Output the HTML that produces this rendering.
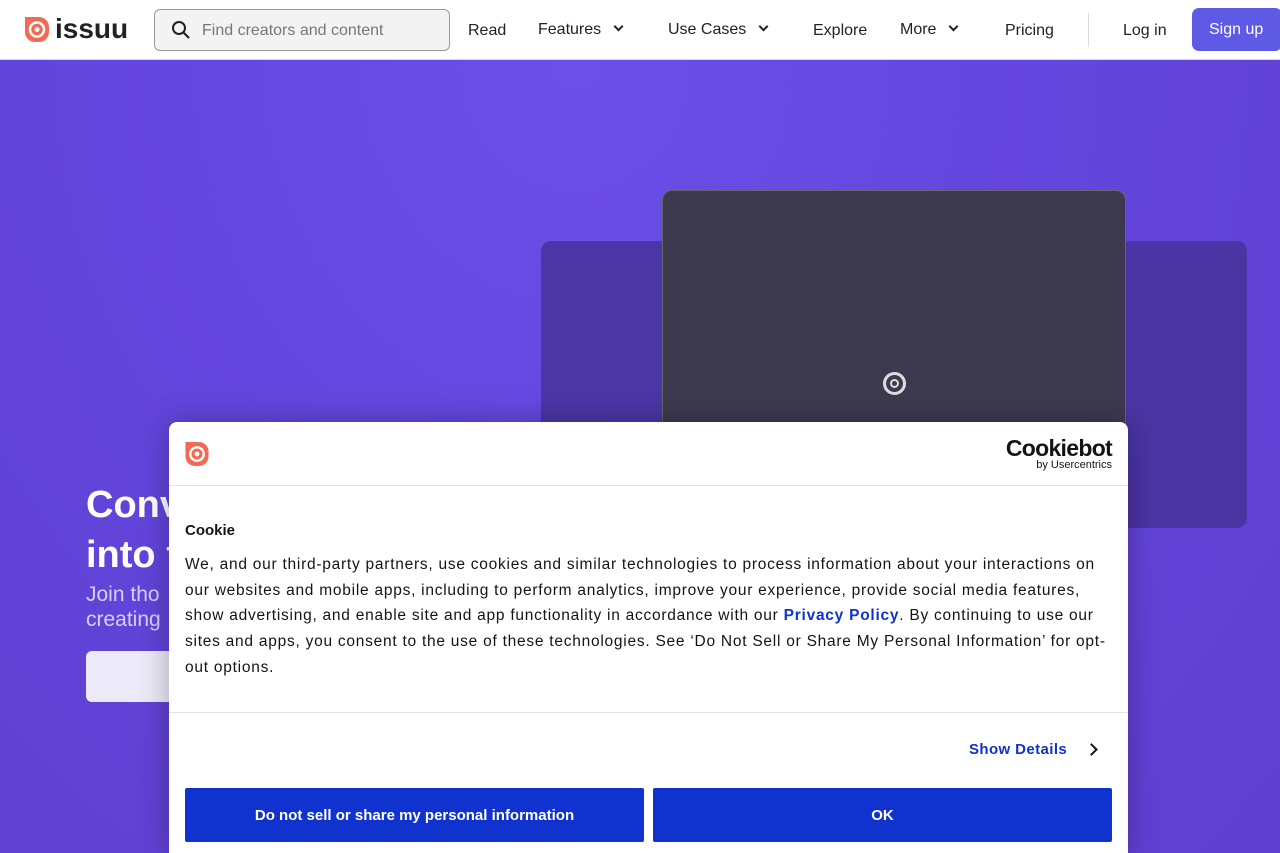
<!DOCTYPE html>
<html><head><meta charset="utf-8"><style>
*{margin:0;padding:0;box-sizing:border-box}
body{width:1280px;height:853px;overflow:hidden;font-family:"Liberation Sans",sans-serif;position:relative;background:#6a4de4}
.nav{position:absolute;top:0;left:0;width:1280px;height:60px;background:#fff;border-bottom:1px solid #d8d4f0;z-index:5}
.nav span{position:absolute;top:22px;font-size:16px;color:#222}
.hero{position:absolute;top:60px;left:0;width:1280px;height:793px;background:radial-gradient(ellipse at 45% 0%,#6c4fe8 0%,#6447df 40%,#5e3fd0 100%)}
.chev{display:inline-block;width:7px;height:7px;border-right:2px solid #222;border-bottom:2px solid #222;transform:rotate(45deg);margin-left:14px;position:relative;top:-4px}
.modal{position:absolute;left:169px;top:422px;width:959px;height:431px;background:#fff;border-radius:8px 8px 0 0;z-index:10;box-shadow:0 0 30px rgba(0,0,0,.3)}
.btn{position:absolute;top:366px;height:54px;background:#1032cf;color:#fff;font-weight:bold;font-size:15px;display:flex;align-items:center;justify-content:center;border-radius:2px}
</style></head><body>
<div class="nav">
<svg style="position:absolute;left:25px;top:17px" width="24" height="25" viewBox="0 0 24 25"><path d="M0 0H14A10 10 0 0 1 24 10V15A10 10 0 0 1 14 25H10A10 10 0 0 1 0 15Z" fill="#f26a54"/><circle cx="12" cy="12.5" r="7" fill="none" stroke="#fff" stroke-width="2.5"/><circle cx="12" cy="12.5" r="2.5" fill="#fff"/></svg>
<span style="left:55px;top:13px;font-size:28px;font-weight:bold;color:#222;letter-spacing:0">issuu</span>
<div style="position:absolute;left:154px;top:9px;width:296px;height:42px;border:1px solid #999;border-radius:6px;background:#f3f3f3"></div>
<svg style="position:absolute;left:171px;top:20px" width="20" height="20" viewBox="0 0 20 20"><circle cx="8" cy="8" r="6" fill="none" stroke="#222" stroke-width="2"/><path d="M12.5 12.5L18 18" stroke="#222" stroke-width="2.2"/></svg>
<span style="left:202px;color:#777">Find creators and content</span>
<span style="left:468px">Read</span>
<span style="left:538px;top:21px">Features<i class="chev"></i></span>
<span style="left:668px;top:21px">Use Cases<i class="chev"></i></span>
<span style="left:813px">Explore</span>
<span style="left:900px;top:21px">More<i class="chev"></i></span>
<span style="left:1005px">Pricing</span>
<div style="position:absolute;left:1088px;top:13px;width:1px;height:34px;background:#ddd"></div>
<span style="left:1123px">Log in</span>
<div style="position:absolute;left:1192px;top:8px;width:90px;height:43px;background:#5e5ae6;border-radius:7px;color:#fff;font-size:16px;padding:13px 0 0 17px">Sign up</div>
</div>
<div class="hero">
<div style="position:absolute;left:541px;top:181px;width:706px;height:287px;background:#48339a;border-radius:10px;opacity:.85"></div>
<div style="position:absolute;left:662px;top:130px;width:464px;height:300px;background:#3d3a50;border-radius:10px;border:1px solid #666"></div>
<svg style="position:absolute;left:882px;top:311px" width="25" height="25"><circle cx="12.5" cy="12.5" r="10" fill="none" stroke="#ddd" stroke-width="3"/><circle cx="12.5" cy="12.5" r="3.5" fill="none" stroke="#ddd" stroke-width="2"/></svg>
<div style="position:absolute;left:86px;top:420px;color:#fff;font-size:38px;font-weight:bold;line-height:50px">Conv<br>into t</div>
<div style="position:absolute;left:86px;top:522px;color:#d8d0f8;font-size:21px;line-height:25px">Join tho<br>creating</div>
<div style="position:absolute;left:86px;top:591px;width:150px;height:51px;background:#eceaf8;border-radius:6px"></div>
</div>
<div class="modal">
<svg style="position:absolute;left:16px;top:20px" width="24" height="24" viewBox="0 0 24 25"><path d="M0 0H14A10 10 0 0 1 24 10V15A10 10 0 0 1 14 25H10A10 10 0 0 1 0 15Z" fill="#f26a54"/><circle cx="12" cy="12.5" r="7" fill="none" stroke="#fff" stroke-width="2.5"/><circle cx="12" cy="12.5" r="2.5" fill="#fff"/></svg>
<div style="position:absolute;right:16px;top:14px;text-align:right;color:#141414"><div style="font-size:23px;font-weight:bold;letter-spacing:-0.7px;line-height:24px">Cookiebot</div><div style="font-size:11px;line-height:11px">by Usercentrics</div></div>
<div style="position:absolute;left:0;top:63px;width:100%;height:1px;background:#e3e3e3"></div>
<div style="position:absolute;left:16px;top:100px;font-weight:bold;font-size:15px;color:#141414">Cookie</div>
<div style="position:absolute;left:16px;top:130px;width:930px;font-size:15.5px;line-height:25.7px;color:#141414;letter-spacing:.75px">We, and our third-party partners, use cookies and similar technologies to process information about your interactions on our websites and mobile apps, including to perform analytics, improve your experience, provide social media features, show advertising, and enable site and app functionality in accordance with our <b style="color:#1032cf">Privacy Policy</b>. By continuing to use our sites and apps, you consent to the use of these technologies. See ‘Do Not Sell or Share My Personal Information’ for opt-out options.</div>
<div style="position:absolute;left:0;top:290px;width:100%;height:1px;background:#e3e3e3"></div>
<div style="position:absolute;left:800px;top:319px;font-weight:bold;font-size:15px;color:#1032cf;letter-spacing:.4px">Show Details</div>
<div style="position:absolute;left:918px;top:323px;width:9px;height:9px;border-right:2px solid #141414;border-top:2px solid #141414;transform:rotate(45deg)"></div>
<div class="btn" style="left:16px;width:459px">Do not sell or share my personal information</div>
<div class="btn" style="left:484px;width:459px">OK</div>
</div>
</body></html>
